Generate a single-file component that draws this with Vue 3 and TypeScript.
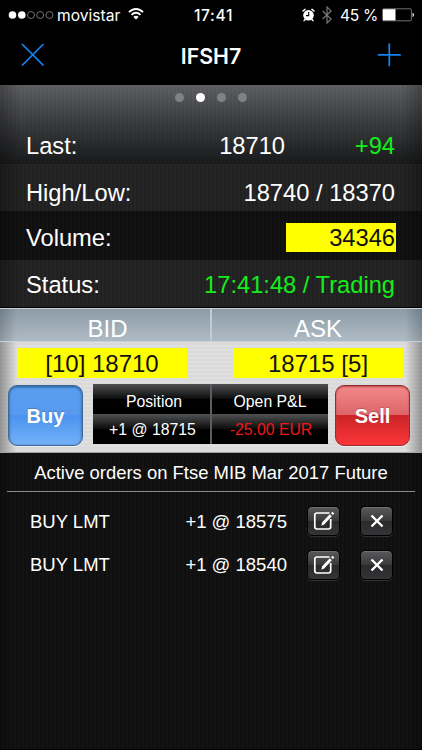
<script setup lang="ts">
interface Order { side: string; detail: string }

const pages = 4
const activePage = 2
const orders: Order[] = [
  { side: 'BUY LMT', detail: '+1 @ 18575' },
  { side: 'BUY LMT', detail: '+1 @ 18540' },
]
</script>

<template>
  <main class="screen">
    <header class="top">
      <div class="status">
        <div class="carrier">
          <svg class="signal" width="46" height="10" viewBox="0 0 46 10">
            <circle cx="4.5" cy="5" r="3.8" fill="#fff" />
            <circle cx="13.8" cy="5" r="3.8" fill="#fff" />
            <g fill="none" stroke="#8b8b8b" stroke-width=".8">
              <circle cx="23" cy="5" r="3.5" />
              <circle cx="32.2" cy="5" r="3.5" />
              <circle cx="41.5" cy="5" r="3.5" />
            </g>
          </svg>
          <span class="carrier-name">movistar</span>
          <svg class="wifi" width="16" height="12" viewBox="0 0 16 12">
            <path d="M1 4.2C5-.1 11-.1 15 4.2M3.5 6.9c2.7-2.8 6.3-2.8 9 0" fill="none" stroke="#fff" stroke-width="1.9" />
            <path d="M8 11.6 5.3 8.9c1.5-1.5 3.9-1.5 5.4 0Z" fill="#fff" />
          </svg>
        </div>
        <span class="clock">17:41</span>
        <div class="power">
          <svg width="13" height="14" viewBox="0 0 13 14">
            <circle cx="6.5" cy="7.2" r="5.3" fill="#fff" />
            <path d="M1 3 3 1.4M12 3 10 1.4M3 11.5l-.9 1.1M10 11.5l.9 1.1" stroke="#fff" stroke-width="1.5" stroke-linecap="round" />
            <path d="M6.7 4v3.6H4" fill="none" stroke="#000" stroke-width="1.1" />
          </svg>
          <svg class="bluetooth" width="10" height="18" viewBox="0 0 10 18">
            <path d="m.6 5 8.5 8.1L5 17V1l4.1 3.9L.6 13" fill="none" stroke="#777" stroke-width="1.2" />
          </svg>
          <span class="percent">45 %</span>
          <svg class="battery" width="33" height="14" viewBox="0 0 33 14">
            <rect x=".6" y=".8" width="28.8" height="12" rx="1.2" fill="none" stroke="#8c8c8c" stroke-width=".8" />
            <rect x="1" y="1.2" width="12.5" height="11.2" fill="#fff" />
            <path d="M30.5 4.7c2 .5 2 3.7 0 4.2Z" fill="#ddd" />
          </svg>
        </div>
      </div>
      <nav class="nav">
        <svg width="24" height="24" viewBox="0 0 24 24"><path d="m1 1 21.5 21.5m0-21.5-21.5 21.5" stroke="#1684f6" stroke-width="1.7" /></svg>
        <h1>IFSH7</h1>
        <svg width="24" height="24" viewBox="0 0 24 24"><path d="M.8 11.8h23M12.3.3v23" stroke="#1684f6" stroke-width="1.7" /></svg>
      </nav>
    </header>

    <section class="quote">
      <div class="hero">
        <div class="dots">
          <i v-for="n in pages" :key="n" :class="{ on: n === activePage }" />
        </div>
        <div class="line">
          <span>Last:</span><span class="price">18710</span><span class="green change">+94</span>
        </div>
      </div>
      <div class="line high"><span>High/Low:</span><span>18740 / 18370</span></div>
      <div class="line volume"><span>Volume:</span><span class="flash">34346</span></div>
      <div class="line state"><span>Status:</span><span class="green">17:41:48 / Trading</span></div>
    </section>

    <section class="book">
      <div class="heads"><span>BID</span><span>ASK</span></div>
      <div class="prices"><span>[10] 18710</span><span>18715 [5]</span></div>
      <div class="trade">
        <button class="buy">Buy</button>
        <div class="position">
          <span>Position</span><span>Open P&amp;L</span>
          <span>+1 @ 18715</span><span class="loss">-25.00 EUR</span>
        </div>
        <button class="sell">Sell</button>
      </div>
    </section>

    <section class="orders">
      <h2>Active orders on Ftse MIB Mar 2017 Future</h2>
      <div v-for="order in orders" :key="order.detail" class="order">
        <span>{{ order.side }}</span>
        <span class="detail">{{ order.detail }}</span>
        <button class="tool edit">
          <svg width="24" height="22" viewBox="0 0 24 22">
            <path d="M17.5 3H5Q2.800 3 2.8 5.2v11.6q0 2.2 2.2 2.2h11.5q2.2 0 2.2-2.2V9" fill="none" stroke="#fff" stroke-width="1.7" />
            <path d="m9.3 15.8.9-3.6 7.6-8 2 2-7.6 8.2Z" fill="#fff" />
            <path d="m19 3.3 1.5-1.6 1.9 1.8-1.5 1.6Z" fill="#fff" />
          </svg>
        </button>
        <button class="tool">
          <svg width="14" height="14" viewBox="0 0 14 14"><path d="m1.5 1.5 11 11m0-11-11 11" stroke="#fff" stroke-width="2.4" /></svg>
        </button>
      </div>
    </section>
  </main>
</template>

<style>
body { margin: 0; background: #000; }
</style>

<style scoped>
* { box-sizing: border-box; }
.screen {
  width: 422px;
  height: 750px;
  overflow: hidden;
  color: #fff;
  font-family: "Liberation Sans", Arial, sans-serif;
  border-bottom: 1px solid #000;
  background:
    linear-gradient(90deg, #0003, #0000 4%, #0000 96%, #0003),
    repeating-linear-gradient(90deg, #0f0f0f 0 2px, #131313 2px 4px);
}
button { border: 0; padding: 0; font-family: inherit; color: #fff; }
svg { display: block; flex: none; }

.top { height: 85px; background: #000; font-family: Inter, sans-serif; }
.status { height: 29px; display: grid; grid-template-columns: 1fr auto 1fr; align-items: center; padding: 0 7px 0 8px; font-size: 15.6px; }
.carrier, .power { display: flex; align-items: center; }
.carrier-name { margin-left: 3px; padding-top: 1px; }
.wifi { margin: -2px 0 0 8px; }
.clock { padding: 1px 0 0 4px; font-weight: 500; letter-spacing: .65px; }
.power { justify-content: flex-end; }
.bluetooth { margin-left: 7px; }
.percent { margin: 0 4px 0 8px; padding-top: 1px; letter-spacing: -.3px; }
.nav { height: 52px; display: flex; justify-content: space-between; align-items: center; padding: 0 21px; }
h1 { margin: 2px 0 0; font-size: 21.3px; line-height: 24px; font-weight: 600; }

.quote {
  height: 223px;
  border-bottom: 1px solid #000;
  background:
    linear-gradient(90deg, #0004, #0000 5%, #0000 95%, #0004),
    repeating-linear-gradient(90deg, #202021 0 2px, #252526 2px 4px);
  font-size: 23.7px;
}
.hero {
  height: 79px;
  background:
    linear-gradient(90deg, #0004, #0000 5%, #0000 95%, #0004),
    repeating-linear-gradient(90deg, #0000 0 2px, #0000000d 2px 4px),
    linear-gradient(#606164, #3a3b3d 50%, #191a1b);
}
.dots { display: flex; justify-content: center; gap: 12px; padding-top: 8px; height: 38px; }
.dots i { width: 9px; height: 9px; border-radius: 50%; background: #808183; }
.dots .on { background: #fff; }
.line { display: flex; justify-content: space-between; align-items: center; height: 47px; padding: 0 27px 0 26px; line-height: 28px; }
.hero .line { height: 41px; padding-top: 5px; }
.price { margin-left: auto; }
.change { width: 110px; text-align: right; }
.green { color: #15ed1b; }
.high { padding-top: 9px; border-top: 1px solid #2b2b2c66; }
.line.volume {
  height: 49px;
  padding-top: 4px;
  padding-right: 26px;
  background:
    linear-gradient(90deg, #0004, #0000 5%, #0000 95%, #0004),
    repeating-linear-gradient(90deg, #0f0f0f 0 2px, #131313 2px 4px);
}
.flash { width: 110px; height: 29px; line-height: 30px; padding-right: 1px; background: #ff0; color: #111; text-align: right; }
.line.state { height: 47px; padding-top: 2px; }

.book {
  height: 145px;
  border-top: 1px solid #c9d1d7;
  border-bottom: 1px solid #a5a5a7;
  background:
    linear-gradient(90deg, #0005, #0000 4%, #0000 96%, #0005),
    repeating-linear-gradient(#dfdfe0 0 2px, #dadadb 2px 4px);
}
.heads {
  display: grid;
  grid-template-columns: 210px 212px;
  height: 33px;
  background: linear-gradient(90deg, #0003, #0000 4%, #0000 96%, #0003), linear-gradient(#8c9ca8, #afbbc4);
  border-bottom: 1px solid #c8d0d6;
}
.heads span { font-size: 24px; line-height: 40px; text-align: center; padding-left: 5px; height: 32px; }
.heads span + span { padding-left: 2px; border-left: 2px solid #c0cbd2; }
.prices { display: flex; gap: 46px; padding: 6px 18px 0 17px; height: 42px; font-size: 24px; }
.prices span { width: 170px; height: 30px; line-height: 31px; background: #ff0; color: #111; text-align: center; }
.trade { display: flex; align-items: flex-start; padding: 0 11px 0 8px; }
.buy, .sell { width: 75px; height: 61px; margin-top: 1px; border-radius: 9px; font-size: 20px; font-weight: 700; line-height: 60px; text-shadow: 0 -1px 1px #0003; }
.buy { background: linear-gradient(#5a9ff0, #5799ee 49%, #4b93ef 50%, #75b1f8); border: 1px solid #3d6899; box-shadow: inset 0 1px 3px #244f88, 0 1px #fff8; }
.sell { background: linear-gradient(#f4898c, #dc6568 49%, #cc2427 50%, #fb3639); border: 1px solid #962b2d; box-shadow: inset 0 1px 2px #b84848, 0 1px #fff8; }
.position { display: grid; grid-template: 30px 30px / 117px 116px; gap: 0 2px; margin: 0 7px 0 10px; font-size: 15.8px; background: #5c5d5f; }
.position span { text-align: center; line-height: 35px; padding-left: 5px; background: linear-gradient(#505153, #0b0b0b 50%, #000 52%); }
.position span:nth-child(2) { padding-left: 0; }
.position span:nth-child(n+3) { padding-left: 2px; line-height: 31px; }
.position .loss { color: #ee1717; }

.orders { font-size: 18.5px; }
h2 { height: 39px; margin: 0 7px 8px; border-bottom: 1px solid #8c8c8c; font-size: 18.45px; font-weight: 400; line-height: 40px; text-align: center; white-space: nowrap; }
.order { display: flex; align-items: center; height: 43.5px; padding: 0 29px 0 30px; }
.detail { margin-left: auto; }
.tool { display: flex; align-items: center; justify-content: center; width: 33px; height: 30px; margin: -1px 0 0 20px; border: 1px solid #000; border-radius: 5px; background: linear-gradient(#5a5a5d, #39393c 50%, #2a2a2c 51%, #343436); box-shadow: inset 0 1px #707073, 0 1px 1px #333; }
</style>
